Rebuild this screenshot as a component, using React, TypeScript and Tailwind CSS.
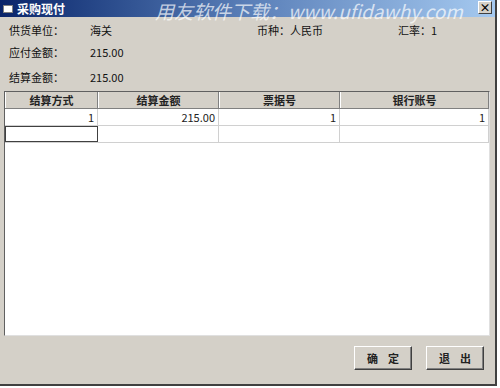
import React from "react";

const cjk = { fontFamily: '"Noto Sans CJK SC", "Liberation Sans", sans-serif' };

export default function App() {
  const cols = ["w-[93px]", "w-[121px]", "w-[121px]", "flex-1"];
  const headers = ["结算方式", "结算金额", "票据号", "银行账号"];
  const row1 = ["1", "215.00", "1", "1"];
  return (
    <div className="w-[500px] h-[388px] bg-white relative overflow-hidden" style={cjk}>
      <div className="absolute left-0 top-0 w-[497px] h-[386px] bg-[#d4d0c8] border-r-2 border-b-2 border-[#404040] flex flex-col">
        {/* title bar */}
        <div className="h-[17px] flex items-center bg-gradient-to-r from-[#0a246a] via-[#5a7fb8] to-[#a6caf0] relative">
          <div className="ml-[3px] w-[10px] h-[8px] bg-white border border-[#808080]" />
          <span className="ml-[4px] text-white text-[12px] font-bold leading-none">采购现付</span>
          <span className="absolute left-[155px] top-[1px] text-[19px] italic leading-[19px] text-white/70 whitespace-nowrap">
            用友软件下载：www.ufidawhy.com
          </span>
          <div className="absolute right-[3px] top-[1px] z-10 w-[14px] h-[13px] bg-[#d4d0c8] border border-t-white border-l-white border-r-[#404040] border-b-[#404040] flex items-center justify-center text-[11px] font-bold leading-none text-black">
            ×
          </div>
        </div>
        {/* info */}
        <div className="relative h-[74px] text-[11px] text-[#111]">
          <span className="absolute left-[9px] top-[5px]">供货单位：</span>
          <span className="absolute left-[90px] top-[5px]">海关</span>
          <span className="absolute left-[257px] top-[5px]">币种：人民币</span>
          <span className="absolute left-[398px] top-[5px]">汇率：1</span>
          <span className="absolute left-[9px] top-[27px]">应付金额：</span>
          <span className="absolute left-[90px] top-[27px]">215.00</span>
          <span className="absolute left-[9px] top-[52px]">结算金额：</span>
          <span className="absolute left-[90px] top-[52px]">215.00</span>
        </div>
        {/* grid */}
        <div className="mx-[4px] mr-[5px] h-[245px] bg-white border border-t-[#606060] border-l-[#606060] border-r-[#e0e0e0] border-b-[#e0e0e0] flex flex-col">
          <div className="flex h-[17px] bg-[#d4d0c8] border-b border-[#808080]">
            {headers.map((h, i) => (
              <div
                key={h}
                className={`${cols[i]} border-r border-[#808080] border-l border-l-white flex items-center justify-center text-[11px] font-bold text-[#222] leading-none`}
              >
                {h}
              </div>
            ))}
          </div>
          <div className="flex h-[17px] border-b border-[#d0d0d0]">
            {row1.map((v, i) => (
              <div
                key={i}
                className={`${cols[i]} border-r border-[#d0d0d0] flex items-center justify-end pr-[3px] text-[11px] text-[#222] leading-none`}
              >
                {v}
              </div>
            ))}
          </div>
          <div className="flex h-[17px] border-b border-[#d0d0d0]">
            {row1.map((_, i) => (
              <div
                key={i}
                className={`${cols[i]} ${i === 0 ? "border border-[#404040]" : "border-r border-[#d0d0d0]"}`}
              />
            ))}
          </div>
        </div>
        {/* buttons */}
        <div className="flex-1 flex items-start justify-end gap-[14px] pr-[11px] pt-[10px]">
          <button className="w-[58px] h-[24px] bg-[#d4d0c8] border border-t-white border-l-white border-r-[#404040] border-b-[#404040] shadow-[inset_-1px_-1px_0_#808080] text-[11px] font-bold text-[#222] tracking-[10px] pl-[10px]">
            确定
          </button>
          <button className="w-[58px] h-[24px] bg-[#d4d0c8] border border-t-white border-l-white border-r-[#404040] border-b-[#404040] shadow-[inset_-1px_-1px_0_#808080] text-[11px] font-bold text-[#222] tracking-[10px] pl-[10px]">
            退出
          </button>
        </div>
      </div>
    </div>
  );
}
